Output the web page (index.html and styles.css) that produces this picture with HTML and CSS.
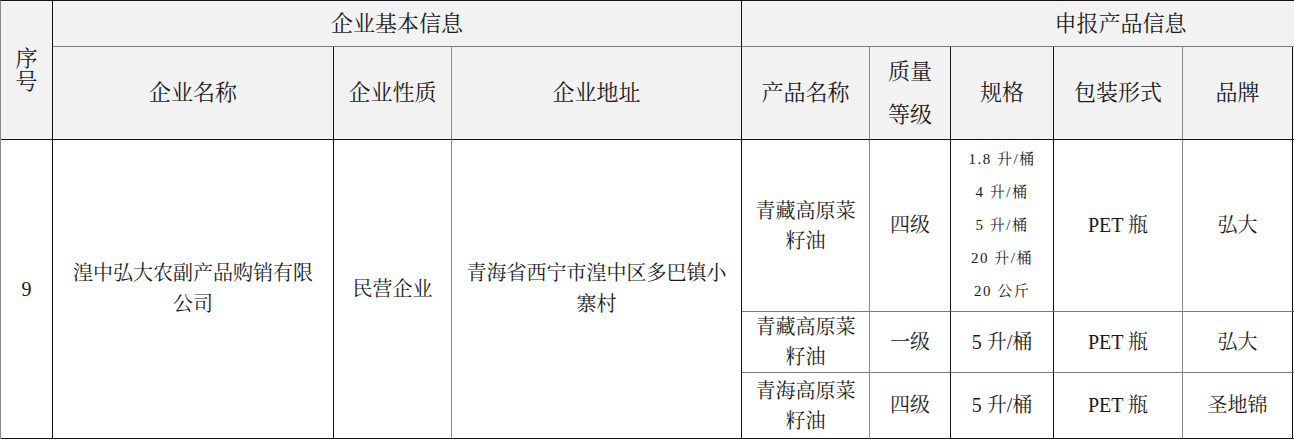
FILE: index.html
```html
<!DOCTYPE html>
<html lang="zh-CN">
<head>
<meta charset="utf-8">
<title>申报产品信息</title>
<link rel="stylesheet" href="styles.css">
</head>
<body>
<table class="grid">
  <colgroup>
    <col class="w-seq"><col class="w-name"><col class="w-type"><col class="w-addr"><col class="w-prod"><col class="w-grade"><col class="w-spec"><col class="w-pack"><col class="w-brand"><col class="w-more">
  </colgroup>
  <tr class="r1">
    <th rowspan="2" class="seq">序<br>号</th>
    <th colspan="3" class="gb">企业基本信息</th>
    <th colspan="6" class="gb">申报产品信息</th>
  </tr>
  <tr class="r2">
    <th>企业名称</th>
    <th class="gr">企业性质</th>
    <th>企业地址</th>
    <th class="gr">产品名称</th>
    <th class="two">质量<br>等级</th>
    <th>规格</th>
    <th class="gr">包装形式</th>
    <th>品牌</th>
    <th></th>
  </tr>
  <tr class="r3">
    <td rowspan="3">9</td>
    <td rowspan="3" class="wrap">湟中弘大农副产品购销有限公司</td>
    <td rowspan="3" class="gr">民营企业</td>
    <td rowspan="3" class="wrap">青海省西宁市湟中区多巴镇小寨村</td>
    <td class="gr gb prod">青藏高原菜籽油</td>
    <td class="gb">四级</td>
    <td class="gb spec">1.8 升/桶<br>4 升/桶<br>5 升/桶<br>20 升/桶<br>20 公斤</td>
    <td class="gr gb">PET 瓶</td>
    <td class="gb">弘大</td>
    <td class="gb"></td>
  </tr>
  <tr class="r4">
    <td class="gr gb prod">青藏高原菜籽油</td>
    <td class="gb">一级</td>
    <td class="gb">5 升/桶</td>
    <td class="gr gb">PET 瓶</td>
    <td class="gb">弘大</td>
    <td class="gb"></td>
  </tr>
  <tr class="r5">
    <td class="gr prod">青海高原菜籽油</td>
    <td>四级</td>
    <td>5 升/桶</td>
    <td class="gr">PET 瓶</td>
    <td>圣地锦</td>
    <td></td>
  </tr>
</table>
</body>
</html>
```
FILE: styles.css
```css
html, body {
  margin: 0;
  padding: 0;
  background: #ffffff;
  overflow: hidden;
}

.grid {
  table-layout: fixed;
  width: 1500px;
  border-collapse: separate;
  border-spacing: 0;
  border-top: 1px solid #111;
  border-left: 1px solid #8a8a8a;
  font-family: "Liberation Serif", "Noto Serif CJK SC", "Noto Sans CJK SC", serif;
  color: #1a1a1a;
}

.w-seq { width: 52px; }
.w-name { width: 281px; }
.w-type { width: 118px; }
.w-addr { width: 290px; }
.w-prod { width: 128px; }
.w-grade { width: 81px; }
.w-spec { width: 103px; }
.w-pack { width: 129px; }
.w-brand { width: 110px; }
.w-more { width: 207px; }

.grid th,
.grid td {
  border-right: 1px solid #111;
  border-bottom: 1px solid #111;
  padding: 0 10px;
  text-align: center;
  vertical-align: middle;
  box-sizing: border-box;
}

.grid th {
  background: #f2f2f2;
  font-weight: normal;
  font-size: 22px;
  line-height: 28px;
}

.grid td {
  font-size: 20px;
  line-height: 31px;
}

.grid .gr { border-right-color: #8a8a8a; }
.grid .gb { border-bottom-color: #7a7a7a; }

.grid th.seq {
  padding: 0;
  line-height: 23px;
}

.grid th.two {
  line-height: 43px;
}

.grid td.wrap {
  padding: 0 12px;
}

.grid td.prod {
  line-height: 30px;
}

.grid td.spec {
  font-size: 15px;
  line-height: 33px;
  letter-spacing: 1.5px;
  padding: 0 2px;
}

.r1 { height: 46px; }
.r2 { height: 93px; }
.r3 { height: 172px; }
.r4 { height: 61px; }
.r5 { height: 66px; }
```
